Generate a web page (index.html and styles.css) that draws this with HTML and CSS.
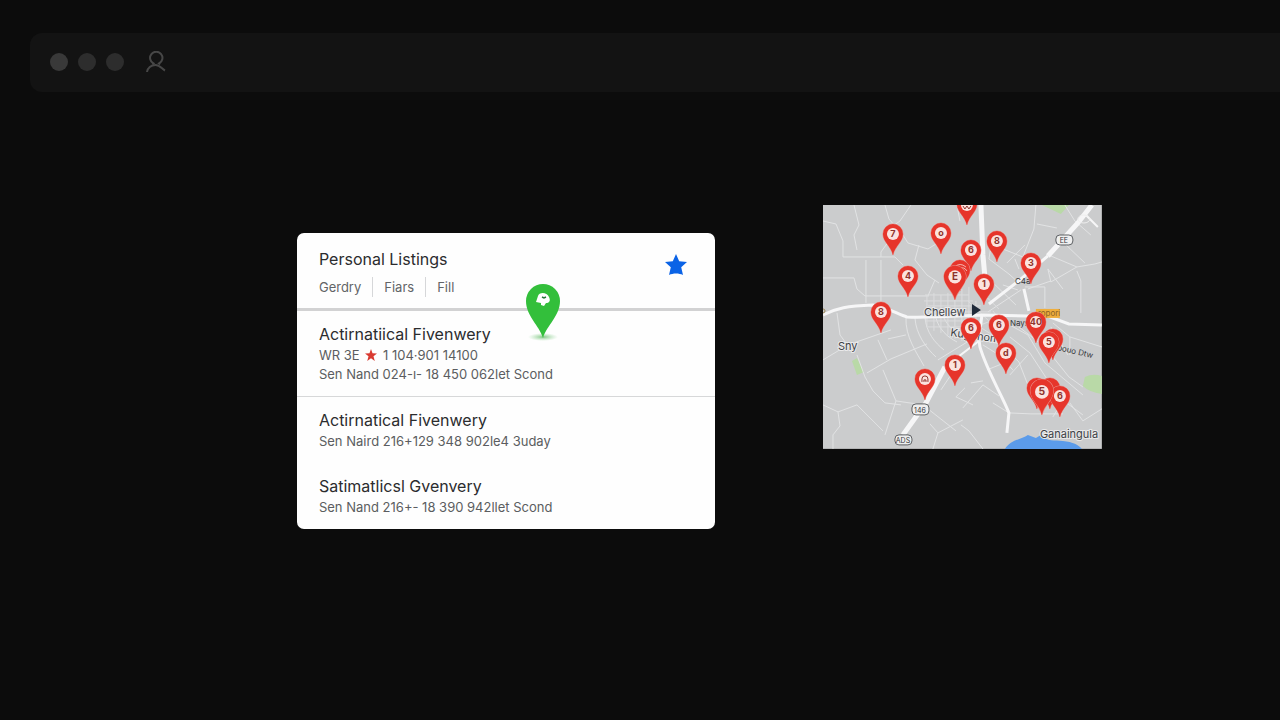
FILE: index.html
```html
<!DOCTYPE html>
<html lang="en">
<head>
<meta charset="utf-8">
<title>Personal Listings</title>
<meta name="viewport" content="width=device-width, initial-scale=1">
<link rel="stylesheet" href="styles.css">
</head>
<body>
<header class="topbar">
  <span class="dot dot-first"></span>
  <span class="dot"></span>
  <span class="dot"></span>
  <button class="profile" type="button" aria-label="Profile">
    <svg width="20" height="22" viewBox="0 0 20 22" fill="none" stroke="currentColor" stroke-width="2"><path d="M6.500 13.500L7.500 12.500A6.200 6.200 0 1 1 13 12.500L14 13.500"/><path d="M1 21C1.500 17 5 14 9.500 14C14 14 16 18 19 19.500"/></svg>
  </button>
</header>
<main class="content">
  <section class="card">
    <div class="card-head">
      <div>
        <h1 class="title">Personal Listings</h1>
        <nav class="tabs" aria-label="Filters">
          <button class="tab" type="button">Gerdry</button>
          <button class="tab" type="button">Fiars</button>
          <button class="tab" type="button">Fill</button>
        </nav>
      </div>
      <button class="favorite" type="button" aria-label="Favorite">
        <svg width="24" height="24" viewBox="0 0 24 24"><path fill="#0b63e6" d="M12 1L15.200 8.300L23 9L17.200 14.200L19 22C15 20 9 20 5 22L6.800 14.200L1 9L8.800 8.300Z"/></svg>
      </button>
    </div>
    <article class="listing listing-ruled">
      <h2 class="name">Actirnatiical Fivenwery</h2>
      <p class="detail">WR 3E <svg class="rating" width="12" height="12" viewBox="0 0 24 24"><path fill="#d93a31" d="M12 0L15 8.500L24 9L17 14.500L19.500 24L12 18.500L4.500 24L7 14.500L0 9L9 8.500Z"/></svg> 1 104·901 14100</p>
      <p class="detail">Sen Nand 024-ı- 18 450 062let Scond</p>
    </article>
    <article class="listing">
      <h2 class="name">Actirnatical Fivenwery</h2>
      <p class="detail">Sen Naird 216+129 348 902le4 3uday</p>
    </article>
    <article class="listing">
      <h2 class="name">Satimatlicsl Gvenvery</h2>
      <p class="detail">Sen Nand 216+- 18 390 942llet Scond</p>
    </article>
    <svg class="green-pin" width="46" height="60" viewBox="0 0 46 60">
      <defs><radialGradient id="glow"><stop offset="0" stop-color="#58b45c" stop-opacity=".75"/><stop offset="1" stop-color="#8fd492" stop-opacity="0"/></radialGradient></defs>
      <ellipse cx="23" cy="54" rx="15" ry="4" fill="url(#glow)"/>
      <path fill="#33bf3b" d="M23 55C19 42 6 33 6 18A17 17 0 0 1 40 18C40 33 27 42 23 55Z"/>
      <path fill="#fff" d="M18 13C19 9 27 9 29 14C31 18 29 20 26 20L24 23L21 22L21 20L16 19Z"/>
      <path fill="none" stroke="#28763a" stroke-width="1.500" d="M22 14L24 15L26 14"/>
    </svg>
  </section>
  <svg class="map" viewBox="0 0 279 244" role="img" aria-label="Map of listings">
    <defs>
      <path id="pin" d="M0 0C-2-9-10-13-10-21A10 10 0 0 1 10-21C10-13 2-9 0 0Z"/>
    </defs>
    <rect width="279" height="244" fill="#cbcccd"/>
    <path fill="#b9d9a7" d="M219 0H246L238 9ZM262 172Q270 168 279 171V189Q266 187 260 181ZM29 156L34 153L41 167L34 170Z"/>
    <path fill="#5b9bea" d="M182 244C188 235 199 234 205 230L213 233L218 230C224 237 232 235 240 236C250 237 256 240 259 244Z"/>
    <g class="roads">
      <path d="M0 16L13 19L20 36L20 52H72L80 60M31 0L36 20L31 30L34 45M0 73H31L34 84L42 91H106M43 55V98M58 55V98M58 52V47L66 36M62 0L66 14L80 30L85 38L105 44L118 36M88 0L77 16L66 24M96 40L92 55L104 70L116 78M134 0L137 16M112 75L105 91"/>
      <path d="M14 108L17 130L28 145M0 155L25 140L68 125M44 168L68 154L104 139M34 150L42 172L50 186L62 198L78 200M55 135L64 155M60 165L73 196L62 230M0 200L15 207L17 221L10 230V244M15 207L34 200L60 226M73 196L100 200L133 226M110 244L115 228L107 219M115 228L140 215M128 170L118 185M142 183L133 192L150 200"/>
      <path d="M83 112C82 132 94 148 101 161M92 113C93 129 103 143 113 152M102 112C103 127 112 138 121 145M83 130L65 134M113 113C116 124 124 132 134 137M121 113C125 121 131 127 139 130M115 155L146 136M148 178L160 176M140 203L160 180L176 191M186 208L208 209L240 209M186 208L170 198M160 244L146 226L138 220"/>
      <path d="M166 54L186 69L196 78M180 44L200 52L211 24L213 0M184 58L202 40M166 54L168 42M192 54L196 64M162 70L193 100M180 80L195 85M228 51L254 62L272 59L279 57M225 64L228 77L254 62M225 64L240 84M238 35L262 58M202 82H222V103M254 66L258 76V108M205 84L228 76M165 107L198 85M214 19L234 23M242 0L252 16L268 30"/>
      <path d="M172 112L205 130L222 158L260 190M168 130L196 157L205 180L220 202M187 132L207 148L224 174L241 196L260 210M196 122L222 142L246 172L260 182M230 118L247 132L279 142M228 122L245 150M160 140L176 150L190 165M205 150L187 170M225 173L210 190M240 196L230 212M247 132V150M247 198L260 216L279 204M164 165L184 157"/>
    </g>
    <g class="streets">
      <path d="M102 90H146M101 96H150M105 101H158M138 107H168M102 116H146M105 122H148M104 90V122M111 88V126M118 90V128M125 88V130M132 86V134M139 84V136M146 82V138M153 96V140M145 96L166 116M153 82L176 104M142 126L168 116M152 119L176 134M170 106L184 124"/>
    </g>
    <g class="highways">
      <path class="wide" d="M158 0L160 50L162 72M225 51L255 18L269 0M122 162L103 198L80 230"/>
      <path d="M0 110C14 103 24 101 50 100C66 103 76 110 84 112C105 113 130 111 160 110L205 111L216 108L246 119L279 120M166 99L197 75L225 51M201 84L206 106M159 110L156 134L157 142C164 166 180 192 186 208L184 228"/>
      <path class="thin" d="M156 136L122 162M261 8L275 22"/>
    </g>
    <ellipse cx="261" cy="14" rx="6" ry="4" fill="none" stroke="#eeeeee"/>
    <rect x="213" y="104" width="24" height="9" fill="#efae3d"/>
    <g class="map-small">
      <text x="215" y="111" fill="#8b6327">ropori</text>
      <text x="192" y="79">C4a</text>
      <text x="187" y="121">Nays</text>
      <text transform="translate(234 145) rotate(13)">oouo Dtw</text>
    </g>
    <g class="shields">
      <rect x="233" y="30" width="17" height="10" rx="4"/><text x="241" y="38">EE</text>
      <rect x="89" y="199" width="17" height="11" rx="4"/><text x="97" y="208">146</text>
      <rect x="72" y="230" width="17" height="10" rx="4"/><text x="80" y="238">ADS</text>
    </g>
    <g class="map-label">
      <text x="101" y="111">Chellew</text><text x="15" y="145">Sny</text>
      <text transform="translate(127 131) rotate(8)">Kugpnom</text><text x="217" y="233">Ganaingula</text>
    </g>
    <path fill="#202a39" d="M149 99L158 105L149 111Z"/>
    <circle cx="0" cy="106" r="2" fill="none" stroke="#9d8756"/>
    <g class="pins">
      <g transform="translate(144 20)"><use href="#pin"/><path class="badge" d="M-6-20A6 6 0 0 0 6-20Z"/><path class="mark" d="M-4-19L-2-16L0-19L2-16L4-19"/></g>
      <g transform="translate(70 50)"><use href="#pin"/><circle cy="-21" r="6"/><text y="-18">7</text></g>
      <g transform="translate(118 49)"><use href="#pin"/><circle cy="-21" r="6"/><text y="-18">o</text></g>
      <g transform="translate(174 57)"><use href="#pin"/><circle cy="-21" r="6"/><text y="-18">8</text></g>
      <g transform="translate(208 79)"><use href="#pin"/><circle cy="-21" r="6"/><text y="-18">3</text></g>
      <g transform="translate(148 66)"><use href="#pin"/><circle cy="-21" r="6"/><text y="-18">6</text></g>
      <g transform="translate(137 86)"><use href="#pin"/><path class="swirl" d="M-5-24Q0-29 6-24M-1-22Q4-25 7-20"/></g>
      <g transform="translate(132 95) scale(1.100)"><use href="#pin"/><circle cy="-21" r="6"/><text y="-18">E</text></g>
      <g transform="translate(85 92)"><use href="#pin"/><circle cy="-21" r="6"/><text y="-18">4</text></g>
      <g transform="translate(161 100)"><use href="#pin"/><circle cy="-21" r="6"/><text y="-18">1</text></g>
      <g transform="translate(58 128)"><use href="#pin"/><circle cy="-21" r="6"/><text y="-18">8</text></g>
      <g transform="translate(148 144)"><use href="#pin"/><circle cy="-21" r="6"/><text y="-18">6</text></g>
      <g transform="translate(176 141)"><use href="#pin"/><circle cy="-21" r="6"/><text y="-18">6</text></g>
      <g transform="translate(213 138)"><use href="#pin"/><circle cy="-21" r="6"/><text y="-18">40</text></g>
      <g transform="translate(183 169)"><use href="#pin"/><circle cy="-21" r="6"/><text y="-18">d</text></g>
      <g transform="translate(230 155)"><use href="#pin"/></g>
      <g transform="translate(226 158)"><use href="#pin"/><circle cy="-21" r="6"/><text y="-18">5</text></g>
      <g transform="translate(132 181)"><use href="#pin"/><circle cy="-21" r="6"/><text y="-18">1</text></g>
      <g transform="translate(102 195)"><use href="#pin"/><circle cy="-21" r="6"/><path class="mark" d="M-3-18V-21Q-3-24 0-24Q3-24 3-21V-18M-1-18V-20H1V-18"/></g>
      <g transform="translate(214 204)"><use href="#pin"/></g>
      <g transform="translate(227 204)"><use href="#pin"/></g>
      <g transform="translate(237 212)"><use href="#pin"/><circle cy="-21" r="6"/><text y="-18">6</text></g>
      <g transform="translate(219 210) scale(1.150)"><use href="#pin"/><circle cy="-20" r="6"/><text y="-17">5</text></g>
    </g>
  </svg>
</main>
</body>
</html>
```
FILE: styles.css
```css
* {
  box-sizing: border-box;
}

body {
  margin: 0;
  min-height: 100vh;
  padding-top: 33px;
  background: #0c0c0c;
  font-family: Inter, "Liberation Sans", sans-serif;
  color: #2b2c2e;
}

h1, h2, p {
  margin: 0;
}

button {
  padding: 0;
  border: 0;
  background: none;
  color: inherit;
  font: inherit;
}

.topbar {
  display: flex;
  align-items: center;
  gap: 10px;
  height: 59px;
  margin-left: 30px;
  padding: 0 0 1px 20px;
  border-radius: 12px 0 0 12px;
  background: #131313;
}

.dot {
  width: 18px;
  height: 18px;
  border-radius: 50%;
  background: #2d2d2d;
}

.dot-first {
  background: #393939;
}

.profile {
  display: flex;
  margin-left: 12px;
  color: #474747;
}

.content {
  display: grid;
  grid-template-columns: 3fr 2fr;
  align-items: start;
  gap: 108px;
  padding: 113px 13.9% 40px 23.2%;
}

.card {
  position: relative;
  margin-top: 28px;
  padding-bottom: 12px;
  border-radius: 7px;
  background: #fefefe;
}

.card-head {
  display: flex;
  justify-content: space-between;
  align-items: flex-start;
  padding: 14px 27px 11px 22px;
  border-bottom: 3px solid #d2d2d3;
}

.title,
.name {
  font-size: 16px;
  font-weight: 400;
  line-height: 24px;
}

.tabs {
  display: flex;
  margin-top: 6px;
  font-size: 13px;
  line-height: 20px;
  color: #626467;
}

.tab + .tab {
  margin-left: 11px;
  padding-left: 11px;
  border-left: 1px solid #d6d7d9;
}

.favorite {
  display: flex;
  margin-top: 6px;
}

.listing {
  padding: 11px 22px 12px;
}

.listing-ruled {
  border-bottom: 1px solid #d7d8d9;
}

.listing:last-of-type {
  padding-bottom: 0;
}

.detail {
  font-size: 13px;
  line-height: 19px;
  color: #5b5d60;
}

.rating {
  margin: 0 2px;
  vertical-align: -1px;
}

.green-pin {
  position: absolute;
  top: 50px;
  left: 223px;
}

.map {
  display: block;
  width: 100%;
  height: auto;
  overflow: hidden;
}

.map text {
  font-family: Inter, "Liberation Sans", sans-serif;
}

.roads path {
  fill: none;
  stroke: #e2e3e4;
  stroke-width: 1;
}

.streets path {
  fill: none;
  stroke: #dcddde;
  stroke-width: 1;
}

.highways path {
  fill: none;
  stroke: #f6f6f7;
  stroke-width: 3;
}

.highways .wide {
  stroke-width: 5;
}

.highways .thin {
  stroke-width: 2;
}

.map-small {
  font-size: 8px;
  fill: #35373a;
}

.shields rect {
  fill: #eeeeee;
  stroke: #5c5f62;
}

.shields text {
  font-size: 7px;
  text-anchor: middle;
  fill: #35373a;
}

.map-label {
  font-size: 11px;
  fill: #404246;
  stroke: #e9e9ea;
  stroke-width: 2;
  paint-order: stroke;
}

.pins use {
  fill: #e6352b;
  stroke: #e98f89;
  stroke-width: 1;
  paint-order: stroke;
}

.pins circle,
.pins .badge {
  fill: #fbe3df;
}

.pins text {
  font-size: 9px;
  font-weight: 700;
  text-anchor: middle;
  fill: #8f332d;
}

.mark {
  fill: none;
  stroke: #8f332d;
}

.swirl {
  fill: none;
  stroke: #f5b8b0;
}
```
